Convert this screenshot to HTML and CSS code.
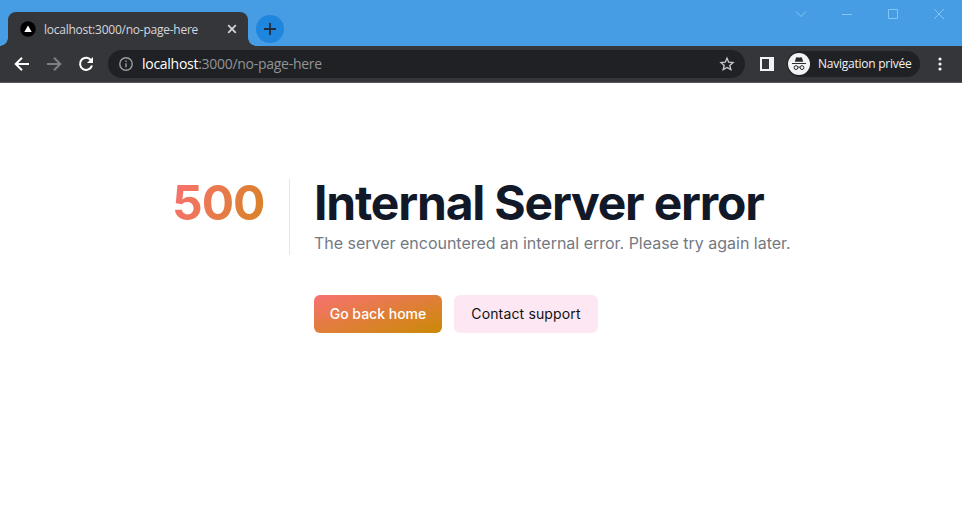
FILE: index.html
```html
<!DOCTYPE html>
<html lang="en">
<head>
<meta charset="utf-8">
<title>Internal Server error</title>
<link rel="stylesheet" href="styles.css">
</head>
<body>
<header class="titlebar">
  <div class="tab">
    <svg class="favicon" width="16" height="16" viewBox="0 0 16 16"><circle cx="8" cy="8" r="7.7" fill="#000"/><path d="M8 4.400 11.700 11H4.300z" fill="#fff"/></svg>
    <span class="tab-title">localhost:3000/no-page-here</span>
    <svg class="tab-close" width="10" height="10" viewBox="0 0 10 10"><path d="M1.200 1.200l7.600 7.600M8.800 1.200L1.200 8.800" stroke="#d5d7da" stroke-width="1.700"/></svg>
  </div>
  <div class="new-tab"><svg width="12" height="12" viewBox="0 0 12 12"><path d="M6 0v12M0 6h12" stroke="#1f2d3d" stroke-width="1.800"/></svg></div>
  <div class="window-controls">
    <svg width="12" height="12" viewBox="0 0 12 12"><path d="M1 3.500l5 5 5-5"/></svg>
    <svg width="12" height="12" viewBox="0 0 12 12"><path d="M1 6.500h10"/></svg>
    <svg width="12" height="12" viewBox="0 0 12 12"><path d="M1.500 1.500h9v9h-9z"/></svg>
    <svg width="12" height="12" viewBox="0 0 12 12"><path d="M1 1l10 10M11 1L1 11"/></svg>
  </div>
</header>
<nav class="toolbar">
  <svg class="nav-icon" width="16" height="16" viewBox="0 0 16 16" stroke="#fff"><path d="M15 8H2M8 1.700L1.700 8 8 14.300"/></svg>
  <svg class="nav-icon" width="16" height="16" viewBox="0 0 16 16" stroke="#7d7f82"><path d="M1 8h13M8 1.700L14.300 8 8 14.300"/></svg>
  <svg class="nav-icon" width="16" height="16" viewBox="0 0 16 16" stroke="#fff"><path d="M13.300 4.500A6.100 6.100 0 1 0 14 9.500"/><path d="M15 1v6H9z" fill="#fff" stroke="none"/></svg>
  <div class="address">
    <svg width="14" height="14" viewBox="0 0 14 14" fill="none" stroke="#9a9da1" stroke-width="1.400"><circle cx="7" cy="7" r="6.200"/><path d="M7 6.200v4M7 3.500v1.500"/></svg>
    <span class="url"><b>localhost</b>:3000/no-page-here</span>
    <svg class="star" width="16" height="16" viewBox="0 0 16 16" fill="none" stroke="#c4c6c9" stroke-width="1.400"><path d="M8 2.200l1.700 4 4.300.4-3.200 2.900 1 4.200L8 11.500l-3.800 2.200 1-4.200L2 6.600l4.300-.4z"/></svg>
  </div>
  <svg class="panel" width="14" height="14" viewBox="0 0 14 14"><path fill="#f1f3f4" fill-rule="evenodd" d="M0 0h14v14H0zM2 2v10h7V2z"/></svg>
  <div class="profile">
    <svg width="22" height="22" viewBox="0 0 22 22"><circle cx="11" cy="11" r="11" fill="#f1f3f4"/><path d="M6.800 8.800l1.200-4c.2-.6.700-.7 1.200-.5 1.300.4 2.300.4 3.600 0 .5-.2 1-.1 1.200.5l1.200 4zM4 10h14v1.100H4z" fill="#292a2d"/><g fill="none" stroke="#292a2d" stroke-width="1"><circle cx="8" cy="14.600" r="1.900"/><circle cx="14" cy="14.600" r="1.900"/><path d="M9.900 14.300q1.100-.6 2.200 0"/></g></svg>
    <span>Navigation privée</span>
  </div>
  <svg class="more" width="4" height="14" viewBox="0 0 4 14" fill="#f1f3f4"><circle cx="2" cy="2" r="1.600"/><circle cx="2" cy="7" r="1.600"/><circle cx="2" cy="12" r="1.600"/></svg>
</nav>
<main class="page">
  <p class="code">500</p>
  <div class="content">
    <div class="message">
      <h1>Internal Server error</h1>
      <p>The server encountered an internal error. Please try again later.</p>
    </div>
    <div class="actions">
      <a class="button primary">Go back home</a>
      <a class="button secondary">Contact support</a>
    </div>
  </div>
</main>
</body>
</html>
```
FILE: styles.css
```css
* { box-sizing: border-box; }
body { margin: 0; height: 527px; overflow: hidden; background: #fff; font-family: Inter, sans-serif; }
h1, p { margin: 0; }
svg { display: block; flex: none; }

.titlebar { display: flex; height: 46px; padding: 12px 0 0 8px; background: #479de4; font-family: "Open Sans", sans-serif; }
.tab { position: relative; display: flex; align-items: center; width: 240px; height: 34px; padding: 0 11px 0 12px; border-radius: 8px 8px 0 0; background: #35363a; }
.tab::before, .tab::after { content: ""; position: absolute; bottom: 0; width: 8px; height: 8px; }
.tab::before { left: -8px; background: radial-gradient(circle at 0 0, transparent 7.500px, #35363a 8px); }
.tab::after { right: -8px; background: radial-gradient(circle at 100% 0, transparent 7.500px, #35363a 8px); }
.tab-title { margin-left: 8px; font-size: 12px; letter-spacing: -0.24px; color: #d5d7da; white-space: nowrap; }
.tab-close { margin-left: auto; }
.new-tab { display: grid; place-items: center; width: 28px; height: 28px; margin: 3px 0 0 8px; border-radius: 50%; background: #1f86de; }
.window-controls { display: flex; gap: 34px; margin: -4px 17px 0 auto; }
.window-controls path { fill: none; stroke: #83c5f5; stroke-width: 1; }

.toolbar { display: flex; align-items: center; height: 37px; padding: 0 20px 1px 14px; border-bottom: 1px solid #58595c; background: #35363a; font-family: "Open Sans", sans-serif; }
.nav-icon { margin-right: 16px; fill: none; stroke-width: 2; }
.nav-icon:nth-child(3) { margin-right: 14px; }
.address { display: flex; align-items: center; width: 637px; height: 28px; padding: 0 10px 0 11px; border-radius: 14px; background: #202124; }
.url { margin-left: 9px; font-size: 14px; letter-spacing: -0.28px; color: #919497; white-space: nowrap; }
.url b { font-weight: 400; color: #fff; }
.star { margin-left: auto; }
.panel { margin-left: 15px; }
.profile { display: flex; align-items: center; width: 133px; height: 26px; margin-left: 13px; padding-left: 1px; border-radius: 13px; background: #202124; color: #f1f3f4; font-size: 12px; letter-spacing: -0.24px; white-space: nowrap; }
.profile span { margin-left: 8px; }
.more { margin-left: auto; }

.page { display: flex; padding: 96px 0 0 172px; }
.code { width: 94px; height: 76px; font-size: 48px; line-height: 48px; font-weight: 700; letter-spacing: -1px; white-space: nowrap; background: linear-gradient(108deg, #f87171, #ca8a04 130%); -webkit-background-clip: text; background-clip: text; color: transparent; }
.content { margin-left: 23px; }
.message { height: 76px; padding-left: 24px; border-left: 1px solid #e5e7eb; white-space: nowrap; }
.message h1 { font-size: 48px; line-height: 48px; font-weight: 700; letter-spacing: -1.200px; color: #111827; }
.message p { margin-top: 4px; font-size: 16px; line-height: 24px; letter-spacing: -0.015px; color: #737983; }
.actions { display: flex; gap: 12px; margin: 40px 0 0 25px; }
.button { display: grid; place-items: center; height: 38px; border-radius: 6px; font-size: 14px; line-height: 20px; font-weight: 500; white-space: nowrap; }
.primary { width: 128px; background: linear-gradient(to bottom right, #f87171, #ca8a04); color: #fff; }
.secondary { width: 144px; background: #fce7f3; color: #111; font-weight: 400; letter-spacing: 0.15px; }
```
